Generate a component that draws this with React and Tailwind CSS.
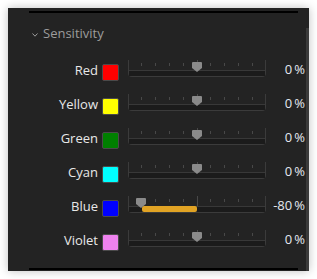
const rows = [
  { name: 'Red', color: 'bg-[#ff0000]', value: 0 },
  { name: 'Yellow', color: 'bg-[#ffff00]', value: 0 },
  { name: 'Green', color: 'bg-[#008000]', value: 0 },
  { name: 'Cyan', color: 'bg-[#00ffff]', value: 0 },
  { name: 'Blue', color: 'bg-[#0000ff]', value: -80 },
  { name: 'Violet', color: 'bg-[#ee82ee]', value: 0 },
];

const ticks = [1, 2, 3, 4, 6, 7, 8, 9];

function Slider({ value }) {
  const w = 138;
  const pos = w / 2 + (value / 100) * (w / 2);
  const left = Math.min(pos, w / 2);
  const width = Math.abs(pos - w / 2);
  return (
    <div className="relative w-[138px] h-[17px] mt-[5px] self-start border-x-[1.5px] border-b-[1.5px] border-[#3b3b3b] rounded-b-[4px]">
      {ticks.map((t) => (
        <div
          key={t}
          className="absolute top-[3px] w-px h-[3px] bg-[#484848]"
          style={{ left: (t * w) / 10 - 1.5 }}
        />
      ))}
      <div className="absolute top-0 left-[67.5px] w-px h-[10px] bg-[#484848]" />
      <div className="absolute left-0 right-0 top-[10px] h-px bg-[#383838]" />
      <div className="absolute left-0 right-0 top-[11px] bottom-0 bg-[#1b1b1b]" />
      {width > 0 && (
        <div
          className="absolute top-[10px] h-[6px] rounded-[2px] bg-[#e1a324]"
          style={{ left: left - 0.5, width }}
        />
      )}
      <svg
        className="absolute top-[2px]"
        style={{ left: pos - 6.5 }}
        width="10"
        height="10"
        viewBox="0 0 10 10"
      >
        <path d="M1 0 H9 Q10 0 10 1 V6 L5 10 L0 6 V1 Q0 0 1 0 Z" fill="#8a8a8a" />
      </svg>
    </div>
  );
}

export default function App() {
  return (
    <div className="w-[317px] h-[279px] bg-white p-[8px] font-['Open_Sans',sans-serif]">
      <div className="relative w-[301px] h-[263px] bg-[#232323] shadow-[0_0_9px_rgba(0,0,0,0.25)] flex flex-col">
        <div className="ml-[21px] mr-[11px] mt-[3px] h-[2px] bg-black" />

        {/* header */}
        <div className="mt-[8px] h-[26px] flex items-center pl-[24px] gap-[5px] text-[13px] text-[#9c9c9c]">
          <svg width="6" height="4" viewBox="0 0 6 4" className="mt-[1px]">
            <polyline points="0.5,0.5 3,3.2 5.5,0.5" fill="none" stroke="#9c9c9c" strokeWidth="1" />
          </svg>
          <span>Sensitivity</span>
        </div>

        {/* rows */}
        <div className="mt-[8px] flex flex-col">
          {rows.map((r) => (
            <div key={r.name} className="h-[34px] flex items-center">
              <div className="w-[90px] text-right text-[13px] text-[#e8e8e8] mt-[-3px]">{r.name}</div>
              <div className={`ml-[4px] w-[17px] h-[17px] rounded-[2px] border border-[#4a4a4a] ${r.color}`} />
              <div className="ml-[9px] flex self-stretch">
                <Slider value={r.value} />
              </div>
              <div className="w-[39px] text-right text-[13px] text-[#e4e8f0] mt-[-5px]">
                {r.value}<span className="ml-[2px]">%</span>
              </div>
            </div>
          ))}
        </div>

        <div className="ml-[21px] mr-[11px] mt-auto mb-px h-[2px] bg-black" />
        <div className="absolute right-0 top-[20px] bottom-0 w-[3px] bg-[#3a3a3a]" />
      </div>
    </div>
  );
}
